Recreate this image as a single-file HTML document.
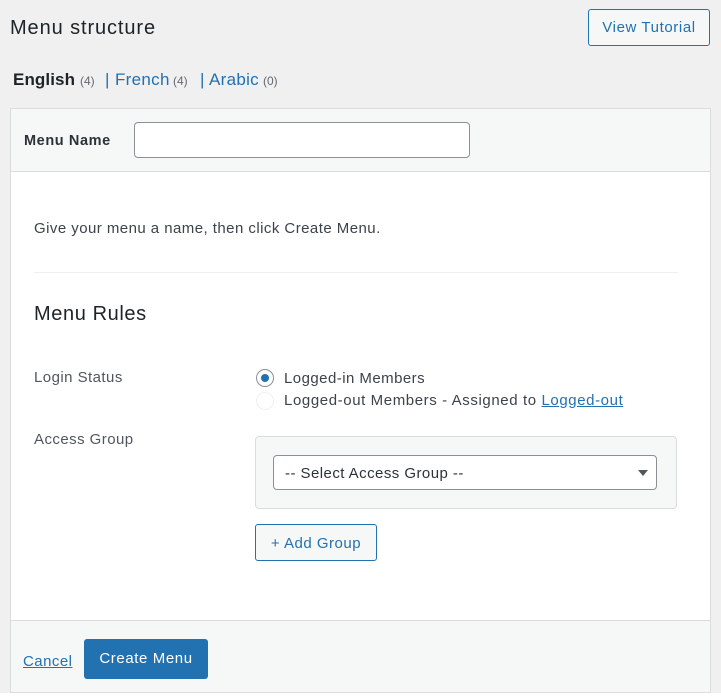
<!DOCTYPE html>
<html><head><meta charset="utf-8"><style>
*{box-sizing:border-box;margin:0;padding:0}
body{width:721px;height:698px;background:#f0f0f1;font-family:"Liberation Sans",sans-serif;position:relative;overflow:hidden;color:#1d2327}
.a{position:absolute;white-space:nowrap}
.c{letter-spacing:0.45px;font-size:15px}
.n{font-size:12px;color:#646970}
.l{color:#2271b1;font-size:17px;letter-spacing:0.3px}
</style></head><body>
<div class="a" style="left:10px;top:17px;font-size:20px;letter-spacing:0.9px;color:#1d2327">Menu structure</div>
<div class="a" style="left:588px;top:9px;width:122px;height:37px;border:1px solid #2271b1;border-radius:3px;background:#f6f7f7;color:#2271b1;font-size:15px;text-align:center;line-height:35px;letter-spacing:0.6px">View Tutorial</div>
<div class="a" style="left:13px;top:70px;font-size:17px;font-weight:bold;letter-spacing:0.1px">English</div>
<div class="a n" style="left:80px;top:74px">(4)</div>
<div class="a l" style="left:105px;top:70px">|</div>
<div class="a l" style="left:115px;top:70px">French</div>
<div class="a n" style="left:173px;top:74px">(4)</div>
<div class="a l" style="left:200px;top:70px">|</div>
<div class="a l" style="left:209px;top:70px">Arabic</div>
<div class="a n" style="left:263px;top:74px">(0)</div>
<div class="a" style="left:10px;top:108px;width:701px;height:585px;border:1px solid #dcdcde;background:#fff"></div>
<div class="a" style="left:11px;top:109px;width:699px;height:63px;background:#f6f7f7;border-bottom:1px solid #dcdcde"></div>
<div class="a" style="left:24px;top:133px;font-size:14.5px;font-weight:bold;letter-spacing:0.6px;color:#2c3338">Menu Name</div>
<div class="a" style="left:134px;top:122px;width:336px;height:36px;border:1px solid #8c8f94;border-radius:4px;background:#fff"></div>
<div class="a c" style="left:34px;top:220px;color:#3c434a">Give your menu a name, then click Create Menu.</div>
<div class="a" style="left:34px;top:272px;width:644px;height:1px;background:#f0f0f1"></div>
<div class="a" style="left:34px;top:303px;font-size:20px;letter-spacing:0.6px;color:#1d2327">Menu Rules</div>
<div class="a c" style="left:34px;top:369px;color:#50575e">Login Status</div>
<div class="a" style="left:256px;top:369px;width:18px;height:18px;border-radius:50%;border:1px solid #8c8f94;background:#fff"></div>
<div class="a" style="left:261px;top:374px;width:8px;height:8px;border-radius:50%;background:#2271b1"></div>
<div class="a c" style="left:284px;top:370px;color:#3c434a">Logged-in Members</div>
<div class="a" style="left:256px;top:392px;width:18px;height:18px;border-radius:50%;border:1px solid #f0f0f1;background:#fff"></div>
<div class="a c" style="left:284px;top:392px;color:#3c434a;letter-spacing:0.6px">Logged-out Members - Assigned to <span style="color:#2271b1;text-decoration:underline">Logged-out</span></div>
<div class="a c" style="left:34px;top:431px;color:#50575e">Access Group</div>
<div class="a" style="left:255px;top:436px;width:422px;height:73px;border:1px solid #dcdcde;border-radius:4px;background:#f6f7f7"></div>
<div class="a" style="left:273px;top:455px;width:384px;height:35px;border:1px solid #8c8f94;border-radius:4px;background:#fff"></div>
<div class="a c" style="left:285px;top:465px;color:#2c3338">-- Select Access Group --</div>
<div class="a" style="left:638px;top:470px;width:0;height:0;border-left:5px solid transparent;border-right:5px solid transparent;border-top:6px solid #50575e"></div>
<div class="a" style="left:255px;top:524px;width:122px;height:37px;border:1px solid #2271b1;border-radius:3px;background:#f6f7f7;color:#2271b1;font-size:15px;text-align:center;line-height:37px;letter-spacing:0.5px">+ Add Group</div>
<div class="a" style="left:11px;top:620px;width:699px;height:72px;background:#f6f7f7;border-top:1px solid #dcdcde"></div>
<div class="a c" style="left:23px;top:653px;color:#2271b1;text-decoration:underline">Cancel</div>
<div class="a" style="left:84px;top:639px;width:124px;height:40px;background:#2271b1;border-radius:3px;color:#fff;font-size:15px;text-align:center;line-height:40px;letter-spacing:0.6px">Create Menu</div>
<div class="a" style="left:0;top:693px;width:721px;height:5px;background:#fff"></div>
</body></html>
